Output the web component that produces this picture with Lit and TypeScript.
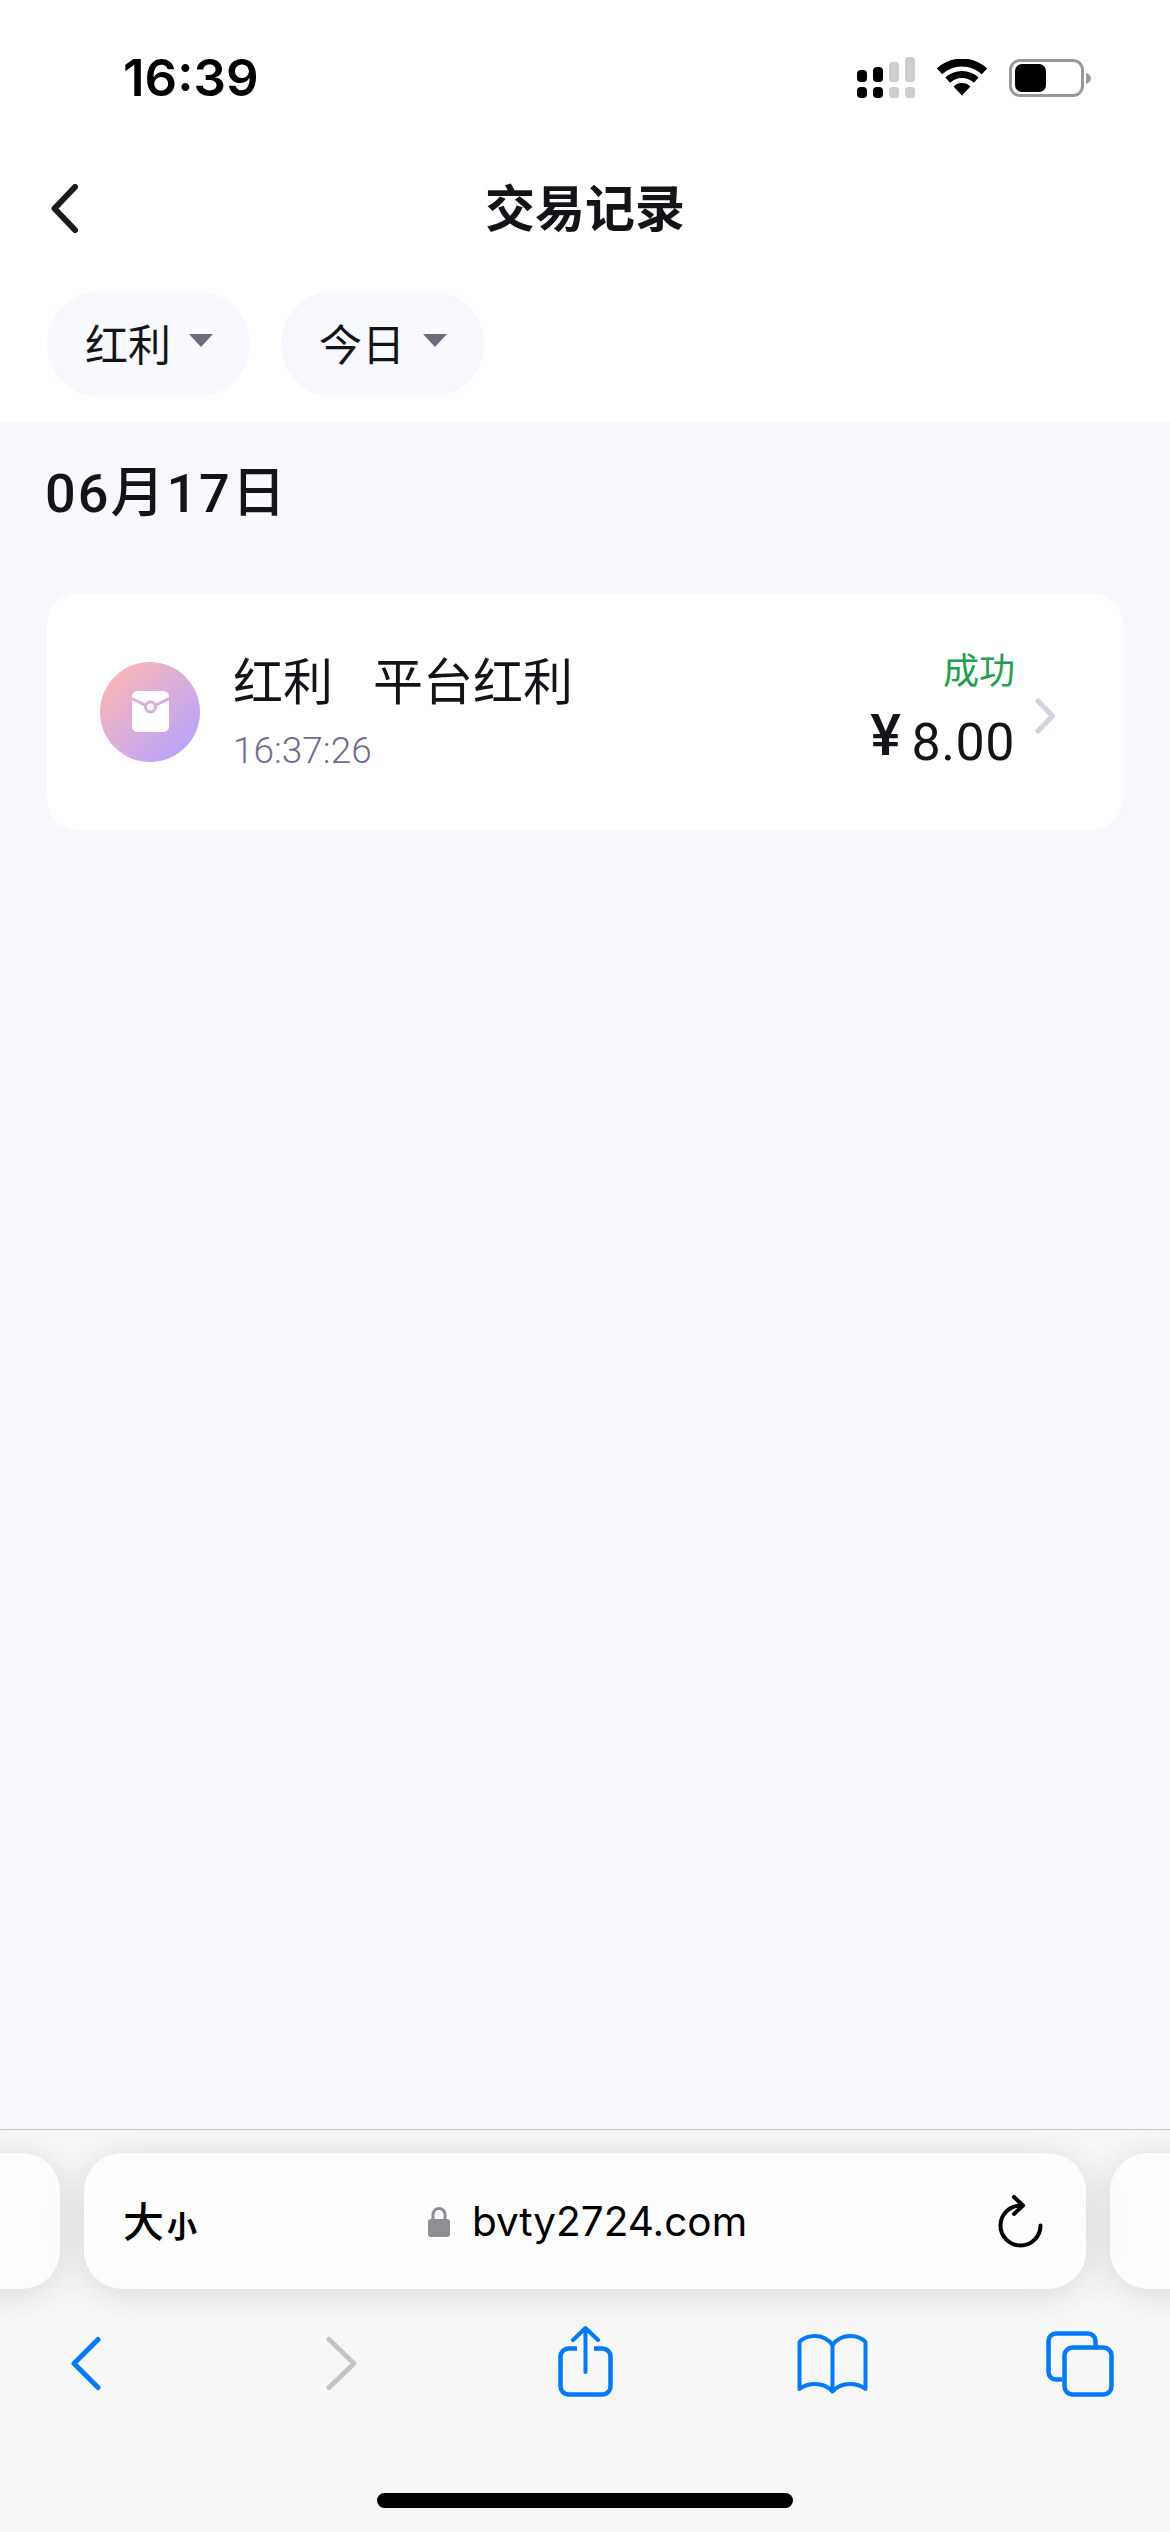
import { LitElement, html, css } from 'lit';
import { customElement } from 'lit/decorators.js';

const filters = ['红利', '今日'];

@customElement('app-root')
export class AppRoot extends LitElement {
  static styles = css`
    :host {
      display: block;
      width: 1170px;
      height: 2532px;
      overflow: hidden;
      font-family: 'Noto Sans CJK SC', 'Noto Sans', sans-serif;
      color: #141418;
      background: #fff;
    }

    .page {
      display: flex;
      flex-direction: column;
      height: 2532px;
    }

    /* status bar */
    .status {
      flex: none;
      height: 155px;
      display: flex;
      align-items: center;
      padding: 0 79px 0 123px;
      box-sizing: border-box;
    }
    .time {
      font-family: Inter, sans-serif;
      font-weight: 600;
      font-size: 51px;
      color: #000;
      margin-right: auto;
    }
    .status-icons {
      display: flex;
      align-items: center;
      gap: 22px;
    }
    svg {
      display: block;
      flex: none;
    }

    /* title row */
    .nav {
      flex: none;
      height: 106px;
      display: grid;
      grid-template-columns: 1fr auto 1fr;
      align-items: center;
    }
    .nav svg {
      margin-left: 51px;
    }
    .title {
      font-size: 50px;
      font-weight: 700;
      line-height: 60px;
      margin-top: -7px;
    }

    .filters {
      flex: none;
      height: 162px;
      box-sizing: border-box;
      padding: 30px 47px 0;
      display: flex;
      gap: 31px;
      align-items: flex-start;
    }
    .pill {
      width: 203px;
      height: 106px;
      border-radius: 53px;
      background: #f8f9ff;
      display: flex;
      align-items: center;
      padding: 0 0 4px 38px;
      box-sizing: border-box;
      font-size: 43px;
    }
    .caret {
      width: 0;
      height: 0;
      margin: -4px 0 0 18px;
      border-left: 12px solid transparent;
      border-right: 12px solid transparent;
      border-top: 13px solid #6b6b7b;
    }

    /* record list */
    .content {
      flex: 1;
      background: #f8f9ff;
      padding: 36px 47px 0;
    }
    .date {
      font-family: Roboto, 'Noto Sans CJK SC', sans-serif;
      font-size: 54px;
      font-weight: 500;
      line-height: 70px;
      letter-spacing: 2px;
      margin-left: -2px;
    }
    .card {
      margin-top: 64px;
      height: 237px;
      background: #fff;
      border-radius: 32px;
      display: flex;
      align-items: center;
      padding: 0 68px 0 53px;
      box-sizing: border-box;
    }
    .badge {
      width: 100px;
      height: 100px;
      border-radius: 50%;
      background: linear-gradient(135deg, #feb6b4 8%, #b5a4ff 92%);
      display: flex;
      align-items: center;
      justify-content: center;
      flex: none;
    }
    .info {
      margin-left: 33px;
      padding-top: 4px;
      flex: 1;
    }
    .info-title {
      display: flex;
      gap: 40px;
      font-size: 50px;
      line-height: 56px;
      margin-top: -5px;
    }
    .info-time {
      font-family: Roboto, sans-serif;
      font-weight: 300;
      font-size: 37px;
      line-height: 44px;
      margin-top: 23px;
      color: #6f6c90;
    }
    .amount-box {
      text-align: right;
      margin-right: 20px;
    }
    .state {
      font-size: 36px;
      line-height: 46px;
      color: #21a04f;
      margin-top: -6px;
    }
    .amount {
      font-family: Roboto, 'Noto Sans CJK SC', sans-serif;
      font-size: 52px;
      line-height: 60px;
      margin-top: 19px;
      letter-spacing: 0.500px;
      display: flex;
      align-items: baseline;
      justify-content: flex-end;
      gap: 10px;
    }
    .yen {
      font-size: 58px;
      font-weight: 500;
      line-height: 60px;
      position: relative;
      top: -5px;
    }
    .card > svg {
      margin-top: 9px;
    }

    /* browser chrome */
    .browser {
      flex: none;
      height: 403px;
      background: #f7f7f7;
      border-top: 1px solid #c6c6c8;
      box-sizing: border-box;
      position: relative;
      overflow: hidden;
    }
    .tabs {
      display: flex;
      gap: 24px;
      padding-top: 23px;
      height: 136px;
    }
    .tab {
      flex: none;
      width: 200px;
      height: 136px;
      background: #fdfdfd;
      border-radius: 38px;
      box-shadow: 0 4px 40px rgba(0, 0, 0, 0.13);
    }
    .tab.left {
      margin-left: -140px;
    }
    .tab.main {
      width: 1002px;
      display: flex;
      align-items: center;
      position: relative;
      padding: 0 43px 0 39px;
      box-sizing: border-box;
    }
    .size {
      display: flex;
      align-items: baseline;
      font-weight: 500;
      color: #000;
      font-size: 41px;
      line-height: 50px;
    }
    .size small {
      font-size: 30px;
      font-weight: 700;
      margin-left: 3px;
    }
    .url {
      flex: 1;
      display: flex;
      align-items: center;
      justify-content: center;
      gap: 22px;
      font-family: Inter, sans-serif;
      font-size: 40.500px;
      color: #000;
      margin-left: -20px;
    }
    .toolbar {
      position: absolute;
      left: 0;
      top: 196px;
      display: grid;
      grid-template-columns: 255px 232px 239px 249px 68px;
      padding-left: 71px;
    }
    .home {
      position: absolute;
      left: 377px;
      top: 363px;
      width: 416px;
      height: 15px;
      border-radius: 8px;
      background: #000;
    }
  `;

  private signal() {
    return html`<svg width="58" height="41" viewBox="0 0 58 41">
      <g fill="#000">
        <rect x="0" y="13" width="10" height="12" rx="4" />
        <rect x="16" y="10" width="10" height="15" rx="4" />
        <rect x="0" y="30" width="10" height="11" rx="4" />
        <rect x="16" y="30" width="10" height="11" rx="4" />
      </g>
      <g fill="#cdcdcd">
        <rect x="32" y="5" width="10" height="20" rx="3.5" />
        <rect x="48" y="0" width="10" height="25" rx="3.5" />
        <rect x="32" y="30" width="10" height="11" rx="3.5" />
        <rect x="48" y="30" width="10" height="11" rx="3.5" />
      </g>
    </svg>`;
  }

  private wifi() {
    return html`<svg width="50" height="37" viewBox="0 0 50 37">
      <path d="M2.5 12.4A33 33 0 0 1 47.5 12.4" fill="none" stroke="#000" stroke-width="8" />
      <path d="M10.7 21.1A21 21 0 0 1 39.3 21.1" fill="none" stroke="#000" stroke-width="7" />
      <path d="M25 36.5L16.5 27.4A12.5 12.5 0 0 1 33.5 27.4Z" fill="#000" />
    </svg>`;
  }

  private battery() {
    return html`<svg width="82" height="38" viewBox="0 0 82 38">
      <rect x="1.5" y="1.5" width="72" height="35" rx="9.5" fill="none" stroke="#999" stroke-width="3" />
      <rect x="6" y="5" width="31" height="28" rx="7" fill="#000" />
      <path d="M77 14C80 15 82 17 82 19.500C82 22 80 24 77 25Z" fill="#999" />
    </svg>`;
  }

  private envelope() {
    return html`<svg width="37" height="41" viewBox="0 0 37 41">
      <rect width="37" height="41" rx="5.500" fill="#fff" />
      <path d="M0 7.500L13 14M24 14L37 7.500" stroke="#d9afdb" stroke-width="3" fill="none" />
      <circle cx="18.500" cy="16" r="5" fill="#fff" stroke="#d9afdb" stroke-width="3" />
    </svg>`;
  }

  private toolbar() {
    return html`<div class="toolbar">
      <svg width="30" height="80" viewBox="0 0 30 80" fill="none" stroke="#007aff" stroke-width="5" stroke-linecap="round" stroke-linejoin="round">
        <path d="M27 13.500L3 37.500L27 61.500" />
      </svg>
      <svg width="31" height="80" viewBox="0 0 31 80" fill="none" stroke="#c4c4c4" stroke-width="5" stroke-linecap="round" stroke-linejoin="round">
        <path d="M3 13.500L28 37.500L3 61.500" />
      </svg>
      <svg width="55" height="80" viewBox="0 0 55 80" fill="none" stroke="#007aff" stroke-linecap="round" stroke-linejoin="round">
        <path stroke-width="4.500" stroke-linecap="butt"
          d="M19 22.500H10.500a8 8 0 0 0 -8 8V60.500a8 8 0 0 0 8 8H44.500a8 8 0 0 0 8 -8V30.500a8 8 0 0 0 -8 -8H36" />
        <path stroke-width="4" d="M27.500 46V3M15 14L27.500 2L40 14" />
      </svg>
      <svg width="71" height="80" viewBox="0 0 71 80" fill="none" stroke="#007aff" stroke-width="4" stroke-linecap="round" stroke-linejoin="round">
        <path d="M2.500 16C6 12 12 10 18 10C25 10 31 13 35.500 19C40 13 46 10 53 10C59 10 65 12 68.500 16V63C64 59.500 59 58 53 58C46 58 40 60.500 35.500 65.500C31 60.500 25 58 18 58C12 58 7 59.500 2.500 63Z" />
        <path d="M35.500 19V65" />
      </svg>
      <svg width="68" height="80" viewBox="0 0 68 80" fill="none" stroke="#007aff" stroke-width="4.500">
        <path d="M49.500 20V15a7.500 7.500 0 0 0 -7.500 -7.500H10a7.500 7.500 0 0 0 -7.500 7.500V46a7.500 7.500 0 0 0 7.500 7.500H16" />
        <rect x="18.500" y="21.500" width="47" height="47" rx="8" />
      </svg>
    </div>`;
  }

  render() {
    return html`
      <div class="page">
        <div class="status">
          <span class="time">16:39</span>
          <div class="status-icons">${this.signal()}${this.wifi()}${this.battery()}</div>
        </div>

        <div class="nav">
          <svg width="27" height="49" viewBox="0 0 27 49" fill="none" stroke="#1a1a1f" stroke-width="6" stroke-linecap="round" stroke-linejoin="round">
            <path d="M24 3L3.500 24.500L24 46" />
          </svg>
          <div class="title">交易记录</div>
        </div>

        <div class="filters">
          ${filters.map((f) => html`<div class="pill">${f}<span class="caret"></span></div>`)}
        </div>

        <div class="content">
          <div class="date">06月17日</div>
          <div class="card">
            <div class="badge">${this.envelope()}</div>
            <div class="info">
              <div class="info-title"><span>红利</span><span>平台红利</span></div>
              <div class="info-time">16:37:26</div>
            </div>
            <div class="amount-box">
              <div class="state">成功</div>
              <div class="amount"><span class="yen">¥</span><span>8.00</span></div>
            </div>
            <svg width="20" height="36" viewBox="0 0 20 36" fill="none" stroke="#d3d3de" stroke-width="5" stroke-linecap="round" stroke-linejoin="round">
              <path d="M3 3L17.500 18L3 33" />
            </svg>
          </div>
        </div>

        <div class="browser">
          <div class="tabs">
            <div class="tab left"></div>
            <div class="tab main">
              <div class="size">大<small>小</small></div>
              <div class="url">
                <svg width="22" height="31" viewBox="0 0 22 31">
                  <path d="M5 14V8.500a6 6 0 0 1 12 0V14" fill="none" stroke="#8e8e93" stroke-width="3" />
                  <rect y="13" width="22" height="18" rx="3" fill="#8e8e93" />
                </svg>
                <span>bvty2724.com</span>
              </div>
              <svg width="45" height="53" viewBox="0 0 45 53" fill="none" stroke="#000" stroke-width="4" stroke-linecap="round" stroke-linejoin="round">
                <path d="M22.500 10.500A20 20 0 1 0 42.500 30.500" />
                <path d="M16 2L25 10.500L16 19" />
              </svg>
            </div>
            <div class="tab"></div>
          </div>
          ${this.toolbar()}
          <div class="home"></div>
        </div>
      </div>
    `;
  }
}
